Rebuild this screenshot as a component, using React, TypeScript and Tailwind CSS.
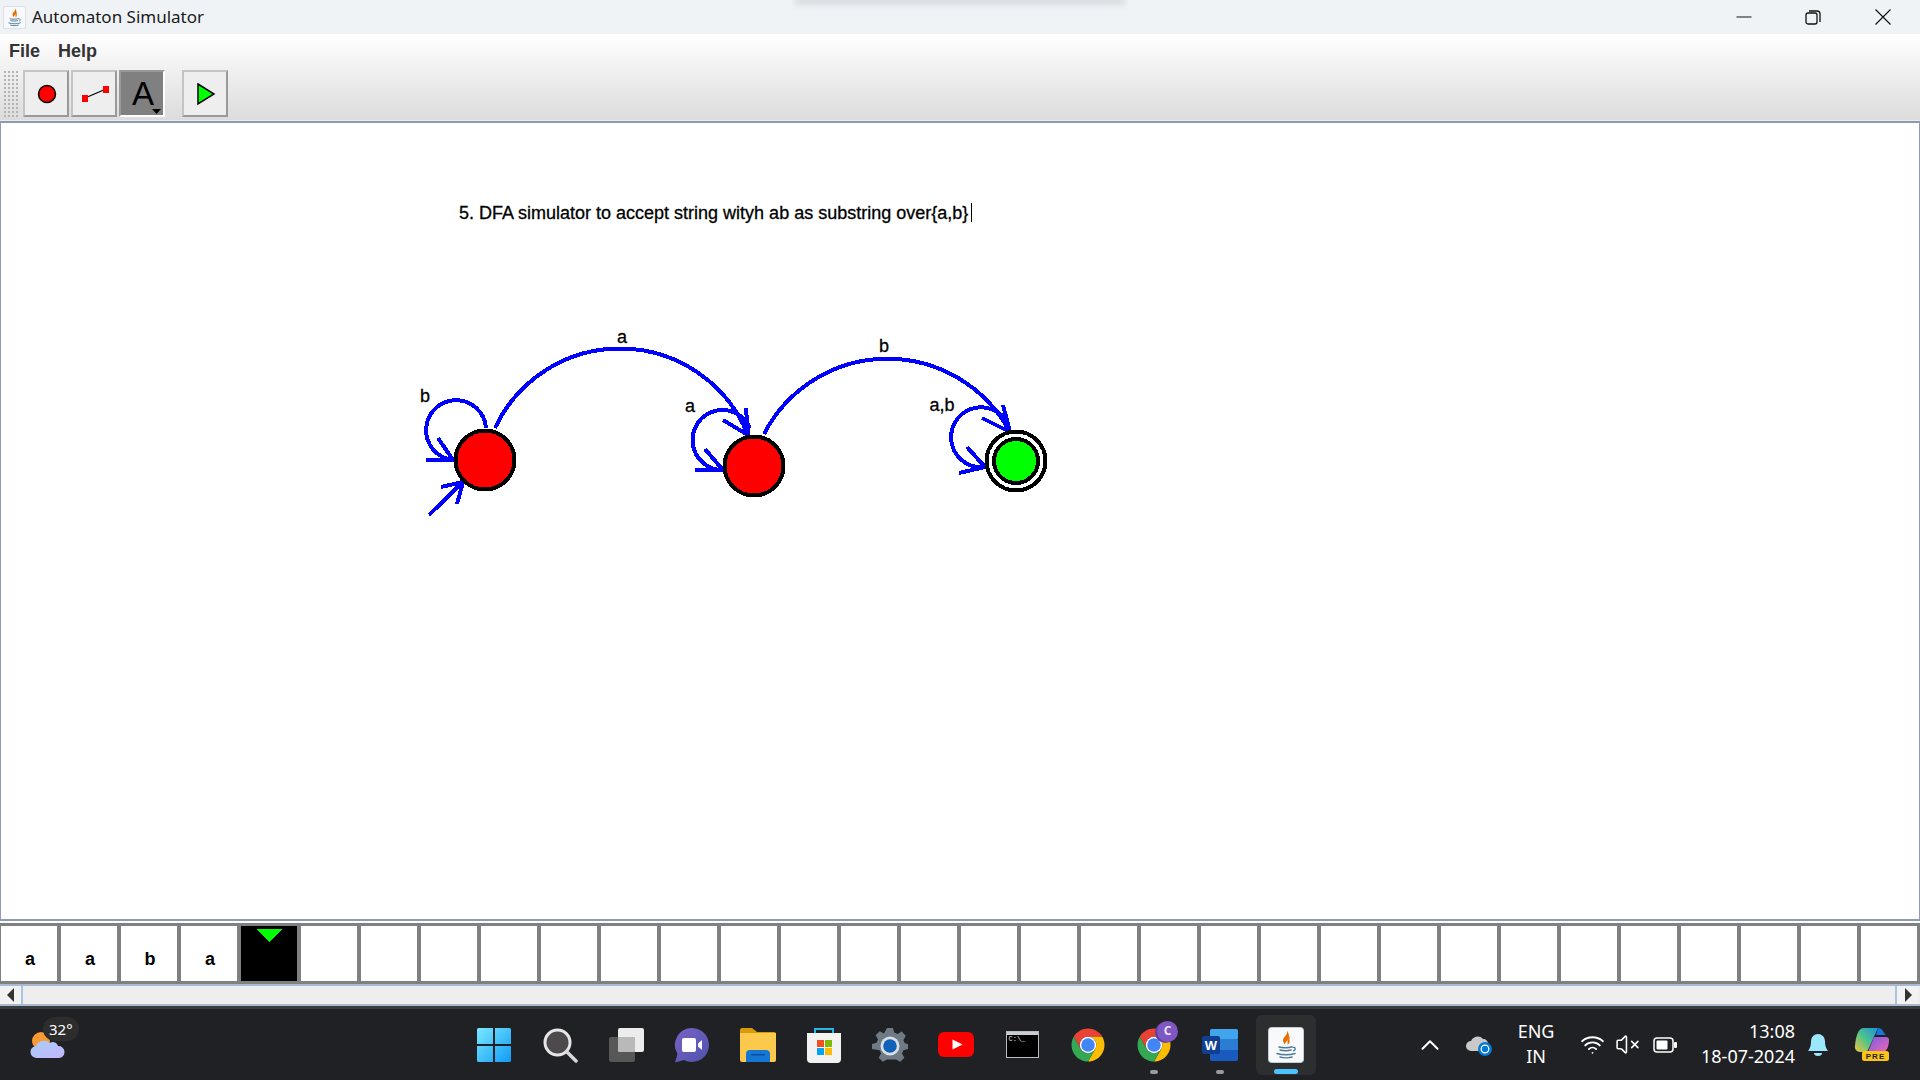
import React from 'react';
import { ChevronUp, VolumeX, Wifi } from 'lucide-react';

const tape = ['a', 'a', 'b', 'a'];
const cells = Array.from({ length: 32 }, (_, i) => i);

const JavaIcon = ({ size }: { size: number }) => (
    <svg width={size} height={size} viewBox="0 0 36 36">
        <rect x="0.5" y="0.5" width="35" height="35" rx="3" fill="#f7f9fb" stroke="#c5ced8" />
        <path d="M19 4c1 4-4 6-4 9.500 0 1.500 1 3 2 4-0.400-3 5-5 4-9-0.300-1.800-1-3.500-2-4.500z" fill="#e76f00" />
        <path d="M23 9c-3 2-4 4-3.500 6 0.300 1 0.500 2-0.500 3 2.500-1 3-3 2.500-4.500-0.300-1.500 0-3 1.500-4.500z" fill="#e76f00" />
        <path d="M11 20c3 1 10 1 13-0.200M12 23c3 0.800 8 0.800 11 0M9 26.500c5 1.800 13 1.800 18 0M12 30c3 1 9 1 12 0" fill="none" stroke="#4f7a9a" strokeWidth="1.500" strokeLinecap="round" />
        <path d="M24.500 20.500c3-1 4 2 0.500 3.500" fill="none" stroke="#4f7a9a" strokeWidth="1.300" />
    </svg>
);

const Chrome = () => (
    <svg width="36" height="36" viewBox="0 0 48 48">
        <path d="M24 13H43.050A22 22 0 0 0 4.950 13L14.470 29.500A11 11 0 0 1 24 13Z" fill="#ea4335" />
        <path d="M24 13H43.050A22 22 0 0 0 4.950 13L14.470 29.500A11 11 0 0 1 24 13Z" fill="#fbbc04" transform="rotate(120 24 24)" />
        <path d="M24 13H43.050A22 22 0 0 0 4.950 13L14.470 29.500A11 11 0 0 1 24 13Z" fill="#34a853" transform="rotate(240 24 24)" />
        <circle cx="24" cy="24" r="11" fill="#fff" />
        <circle cx="24" cy="24" r="9" fill="#4285f4" />
    </svg>
);

const StartIcon = () => (
    <svg width="36" height="36" viewBox="0 0 36 36">
        <defs>
            <linearGradient id="win" x1="0" y1="0" x2="1" y2="1">
                <stop offset="0" stopColor="#7ce8ff" />
                <stop offset="1" stopColor="#0f9bf5" />
            </linearGradient>
        </defs>
        <path d="M1 2.500A1.500 1.500 0 0 1 2.500 1H17v16H1zM19 1h14.500A1.500 1.500 0 0 1 35 2.500V17H19zM1 19h16v16H2.500A1.500 1.500 0 0 1 1 33.500zM19 19h16v14.500a1.500 1.500 0 0 1-1.500 1.500H19z" fill="url(#win)" />
    </svg>
);

const SearchIcon = () => (
    <svg width="36" height="36" viewBox="0 0 36 36">
        <circle cx="15.500" cy="15.500" r="12.500" fill="#4c4a4d" stroke="#e6e6e6" strokeWidth="3" />
        <path d="M25 25l9 9" stroke="#d8d8d8" strokeWidth="3.500" strokeLinecap="round" />
    </svg>
);

const TaskView = () => (
    <svg width="36" height="36" viewBox="0 0 36 36">
        <rect x="10" y="1" width="26" height="24" rx="2" fill="#ececec" />
        <rect x="1" y="10" width="26" height="25" rx="2" fill="#5d5d5d" fillOpacity="0.9" />
        <rect x="10" y="10" width="17" height="15" rx="1" fill="#b9b9b9" />
    </svg>
);

const MeetIcon = () => (
    <svg width="36" height="36" viewBox="0 0 36 36">
        <defs>
            <linearGradient id="meet" x1="0" y1="0" x2="1" y2="1">
                <stop offset="0" stopColor="#7a62c4" />
                <stop offset="1" stopColor="#4d53ad" />
            </linearGradient>
        </defs>
        <path d="M18 1a17 17 0 1 1-8 32L1 35.500 3.500 27A17 17 0 0 1 18 1z" fill="url(#meet)" />
        <rect x="8" y="11" width="14" height="14" rx="2" fill="#fff" />
        <path d="M24 16.500l4-3.500v10l-4-3.500z" fill="#fff" />
    </svg>
);

const FolderIcon = () => (
    <svg width="36" height="34" viewBox="0 0 36 34">
        <path d="M0 2a2 2 0 0 1 2-2h10l5 4h17a2 2 0 0 1 2 2v4H0z" fill="#d89c0a" />
        <path d="M0 5h36v27a2 2 0 0 1-2 2H2a2 2 0 0 1-2-2z" fill="#fcc94d" />
        <path d="M6 34v-8a4 4 0 0 1 4-4h16a4 4 0 0 1 4 4v8z" fill="#1477d4" />
        <rect x="11" y="26" width="14" height="1.500" fill="#0b4f9c" />
    </svg>
);

const StoreIcon = () => (
    <svg width="36" height="36" viewBox="0 0 36 36">
        <path d="M9 7V2h18v5" fill="none" stroke="#2bb3ea" strokeWidth="2" />
        <path d="M1 6h34v26a4 4 0 0 1-4 4H5a4 4 0 0 1-4-4z" fill="#f2f2f2" />
        <rect x="11" y="13" width="7" height="7" fill="#f25022" />
        <rect x="19" y="13" width="7" height="7" fill="#7fba00" />
        <rect x="11" y="21" width="7" height="7" fill="#00a4ef" />
        <rect x="19" y="21" width="7" height="7" fill="#ffb900" />
    </svg>
);

const SettingsIcon = () => (
    <svg width="36" height="36" viewBox="0 0 36 36">
        <path d="M15 1h6l1.200 4.600 3.300 1.400 4.200-2.400 4.100 4.100-2.400 4.200 1.400 3.300L36 17v5l-4.600 1.200-1.400 3.300 2.400 4.200-4.100 4.100-4.200-2.400H15l-4.200 2.400-4.100-4.100 2.400-4.200-1.400-3.300L0 22v-5l4.600-1.200 1.400-3.300-2.400-4.200 4.100-4.100 4.200 2.400z" fill="#6f7a85" />
        <circle cx="18" cy="19" r="9.500" fill="#d9dfe5" />
        <circle cx="18" cy="19" r="6.800" fill="#0f62b8" />
    </svg>
);

const YouTube = () => (
    <svg width="36" height="26" viewBox="0 0 36 26">
        <rect width="36" height="25" rx="6" fill="#f00" />
        <path d="M14.500 7.500l10 5-10 5z" fill="#fff" />
    </svg>
);

const CmdIcon = () => (
    <div className="flex h-[27px] w-[33px] flex-col border border-[#b8bcc0] bg-black">
        <div className="h-[3px] bg-[#c9ccd0]" />
        <span className="pl-[2px] font-['Liberation_Mono',monospace] text-[7px] leading-[9px] text-[#e8e8e8]">C:\_</span>
    </div>
);

const WordIcon = () => (
    <svg width="36" height="32" viewBox="0 0 36 32">
        <rect x="8" y="0" width="28" height="32" rx="2" fill="#185abd" />
        <rect x="8" y="0" width="28" height="10.500" rx="2" fill="#41a5ee" />
        <rect x="8" y="10.500" width="28" height="10.500" fill="#2b7cd3" />
        <rect x="0" y="7" width="18" height="18" rx="2" fill="#103f91" />
        <text x="9" y="21" textAnchor="middle" fontSize="13" fontWeight="700" fill="#fff" fontFamily="Liberation Sans, sans-serif">W</text>
    </svg>
);

const Copilot = () => (
    <svg width="36" height="34" viewBox="0 0 36 34">
        <defs>
            <linearGradient id="cpa" x1="0" y1="1" x2="1" y2="0">
                <stop offset="0" stopColor="#f4c53c" />
                <stop offset="0.500" stopColor="#4cc38a" />
                <stop offset="1" stopColor="#1d8fe0" />
            </linearGradient>
            <linearGradient id="cpb" x1="0" y1="0" x2="1" y2="1">
                <stop offset="0" stopColor="#7a58e8" />
                <stop offset="1" stopColor="#f06ab0" />
            </linearGradient>
        </defs>
        <path d="M10 0h14l-10 22a4 4 0 0 1-4 2H6a5 5 0 0 1-5-6C2 8 4 0 10 0z" fill="url(#cpa)" />
        <path d="M24 0c3 0 5 2 6 5l2 2H22z" fill="#1677d8" />
        <path d="M20 9h12a3 3 0 0 1 3 3c0 5-2 12-6 12H14z" fill="url(#cpb)" />
        <rect x="8" y="23" width="27" height="10" rx="2.500" fill="#fcc419" />
        <text x="21.500" y="31" textAnchor="middle" fontSize="8" fontWeight="700" letterSpacing="1" fill="#222" fontFamily="Liberation Sans, sans-serif">PRE</text>
    </svg>
);

const WeatherIcon = () => (
    <svg width="36" height="30" viewBox="0 0 36 30">
        <defs>
            <linearGradient id="cloud" x1="0" y1="0" x2="1" y2="1">
                <stop offset="0" stopColor="#a9cdf8" />
                <stop offset="1" stopColor="#c3b6fb" />
            </linearGradient>
        </defs>
        <circle cx="11" cy="11" r="9" fill="#f79a33" />
        <path d="M7 28a6 6 0 0 1-1-12c2-5 10-7 14-3 2-2 7-1 8 3a6 6 0 0 1 1 12z" fill="url(#cloud)" />
    </svg>
);

const dockIcons = [
    <StartIcon key="start" />,
    <SearchIcon key="search" />,
    <TaskView key="taskview" />,
    <MeetIcon key="meet" />,
    <FolderIcon key="folder" />,
    <StoreIcon key="store" />,
    <SettingsIcon key="settings" />,
    <YouTube key="yt" />,
    <CmdIcon key="cmd" />,
    <Chrome key="chrome" />,
];

const ToolButton = ({ children, active }: { children: React.ReactNode; active?: boolean }) => (
    <div
        className={
            active
                ? 'relative flex h-[47px] w-[46px] items-center justify-center border-2 border-[#999] border-b-white border-r-white bg-[#808080] pl-[2px]'
                : 'relative flex h-[47px] w-[46px] items-center justify-center border-2 border-t-[#c4c4c4] border-l-[#c4c4c4] border-r-[#999] border-b-[#999] bg-[#eee] pl-[2px]'
        }
    >
        {children}
    </div>
);

const Diagram = () => (
    <svg className="h-[796px] w-[1918px]" viewBox="1 123 1918 796" shapeRendering="crispEdges">
        <g fontFamily="Liberation Sans, sans-serif" fontSize="18" fill="#000" textAnchor="middle" stroke="#000" strokeWidth="0.3">
            <text x="459" y="219" textAnchor="start">5. DFA simulator to accept string wityh ab as substring over{'{'}a,b{'}'}</text>
            <text x="622" y="343">a</text>
            <text x="425" y="402">b</text>
            <text x="690" y="412">a</text>
            <text x="884" y="352">b</text>
            <text x="942" y="411">a,b</text>
        </g>
        <path d="M971 203v19" stroke="#000" strokeWidth="1" />
        <g fill="none" stroke="#0000ff" strokeWidth="4">
            <path d="M495 428A138 138 0 0 1 748 435" />
            <path d="M746 408L748 435L723 420" />
            <path d="M486 428A30 30 0 1 0 453 460" />
            <path d="M426 460H453L438 438" />
            <path d="M429 515L463 482M441 487L463 482L457 504" />
            <path d="M750 428A30 30 0 1 0 723 470" />
            <path d="M695 470H723L705 449" />
            <path d="M764 434A139 139 0 0 1 1010 432" />
            <path d="M1003 405L1010 432L982 418" />
            <path d="M1008 424A30 30 0 1 0 985 467" />
            <path d="M959 473L985 467L967 447" />
        </g>
        <g stroke="#000" strokeWidth="4">
            <circle cx="485" cy="460" r="29.500" fill="#ff0000" />
            <circle cx="754" cy="466" r="29.500" fill="#ff0000" />
            <circle cx="1016" cy="461" r="29.500" fill="#fff" />
            <circle cx="1016" cy="461" r="22" fill="#00ff00" />
        </g>
    </svg>
);

const App: React.FC = () => {
    return (
        <div className="relative flex h-[1080px] w-[1920px] flex-col overflow-hidden bg-white font-['Liberation_Sans',sans-serif]">
            {/* title bar */}
            <div className="relative flex h-[34px] shrink-0 items-center overflow-hidden bg-[#f0f3f6] pl-[3px]">
                {/* shadow of a hidden popup */}
                <div className="absolute left-[795px] top-[-4px] h-[9px] w-[330px] bg-[#d8dcdf] blur-[3px]" />
                <JavaIcon size={23} />
                <span className="ml-[6px] font-['Noto_Sans',sans-serif] text-[17px] text-[#1a1a1a]">Automaton Simulator</span>
                <div className="ml-auto flex items-center">
                    <svg width="18" height="18" viewBox="0 0 18 18" className="mr-[51px]">
                        <path d="M1.500 9h15" stroke="#111" strokeWidth="1" />
                    </svg>
                    <svg width="18" height="18" viewBox="0 0 18 18" className="mr-[52px]">
                        <rect x="2" y="5" width="11" height="11" rx="2" fill="none" stroke="#111" strokeWidth="1.300" />
                        <path d="M5 3h8a3 3 0 0 1 3 3v8" fill="none" stroke="#111" strokeWidth="1.300" />
                    </svg>
                    <svg width="18" height="18" viewBox="0 0 18 18" className="mr-[28px]">
                        <path d="M1.500 1.500l15 15M16.500 1.500l-15 15" stroke="#111" strokeWidth="1.200" />
                    </svg>
                </div>
            </div>

            {/* menu + toolbar */}
            <div className="flex h-[87px] shrink-0 flex-col border-b border-[#ececec] bg-gradient-to-b from-white to-[#dcdcdc]">
                <div className="flex h-[36px] gap-[18px] pl-[9px] pt-[6px] text-[18px] font-bold leading-[22px] text-[#333]">
                    <span>File</span>
                    <span>Help</span>
                </div>
                <div className="flex items-start pl-[3px]">
                    <div className="mr-[5px] h-[47px] w-[15px] bg-[radial-gradient(#b4b4b4_1px,transparent_1px)] bg-[length:4px_4px]" />
                    <div className="flex gap-[2px]">
                        <ToolButton>
                            <svg width="20" height="20" viewBox="0 0 20 20">
                                <circle cx="10" cy="10" r="8.500" fill="#ff0000" stroke="#000" strokeWidth="1.500" />
                            </svg>
                        </ToolButton>
                        <ToolButton>
                            <svg width="30" height="20" viewBox="0 0 30 20">
                                <path d="M5 14L26 5" stroke="#000" strokeWidth="1.300" />
                                <rect x="2" y="11" width="6" height="7" fill="#ff0000" />
                                <rect x="23" y="2" width="6" height="7" fill="#ff0000" />
                            </svg>
                        </ToolButton>
                        <ToolButton active>
                            <span className="text-[33px] leading-none text-black">A</span>
                            <svg width="9" height="5" viewBox="0 0 9 5" className="absolute bottom-[1px] right-[2px]">
                                <path d="M0 0h9L4.500 5z" fill="#000" />
                            </svg>
                        </ToolButton>
                    </div>
                    <div className="ml-[17px]">
                        <ToolButton>
                            <svg width="20" height="24" viewBox="0 0 20 24">
                                <path d="M2 2L18 12L2 22Z" fill="#00ff00" stroke="#000" strokeWidth="1.500" />
                            </svg>
                        </ToolButton>
                    </div>
                </div>
            </div>

            {/* canvas */}
            <div className="h-[800px] shrink-0 border-x border-y-2 border-[#8a9bb3] bg-white">
                <Diagram />
            </div>

            {/* tape */}
            <div className="mt-[2px] flex h-[61px] shrink-0 gap-[4px] border-y-[3px] border-[#808080] bg-[#808080] pl-[1px]">
                {cells.map((i) => (
                    <div
                        key={i}
                        className={
                            i === 4
                                ? 'relative flex h-[55px] w-[56px] shrink-0 justify-center bg-black'
                                : 'flex h-[55px] w-[56px] shrink-0 items-end justify-center bg-white pb-[12px] pl-[2px] text-[18px] font-bold leading-[20px] text-black'
                        }
                    >
                        {i === 4 ? (
                            <svg width="26" height="13" viewBox="0 0 26 13" className="mt-[3px]" shapeRendering="crispEdges">
                                <path d="M0 0h26L13 13z" fill="#00ff00" />
                            </svg>
                        ) : (
                            tape[i]
                        )}
                    </div>
                ))}
            </div>

            {/* scrollbar */}
            <div className="flex h-[22px] shrink-0 border-y-2 border-[#a9bad0] bg-[#eee]">
                <div className="flex w-[23px] items-center justify-center border-r-2 border-[#a9c4e0] bg-[#f2f2f2]">
                    <svg width="8" height="14" viewBox="0 0 8 14">
                        <path d="M7 0v14L0 7z" fill="#333" />
                    </svg>
                </div>
                <div className="flex-1" />
                <div className="mr-[2px] flex w-[23px] items-center justify-center border-l-2 border-[#a9c4e0] bg-[#f2f2f2]">
                    <svg width="8" height="14" viewBox="0 0 8 14">
                        <path d="M1 0v14l7-7z" fill="#333" />
                    </svg>
                </div>
            </div>

            {/* taskbar */}
            <div className="relative flex h-[74px] shrink-0 items-center border-t-[3px] border-[#3a3d40] bg-[#202124] font-['Noto_Sans',sans-serif] text-white">
                <div className="relative w-[461px] shrink-0 self-stretch">
                    <div className="absolute left-[30px] top-[21px]">
                        <WeatherIcon />
                    </div>
                    <div className="absolute left-[43px] top-[8px] rounded-full bg-[#2d2d2d] px-[6px] text-[15px] leading-[24px]">32°</div>
                </div>
                <div className="flex items-center">
                    {dockIcons.map((icon, i) => (
                        <div key={i} className="flex h-[60px] w-[66px] items-center justify-center">
                            {icon}
                        </div>
                    ))}
                    <div className="relative flex h-[60px] w-[66px] items-center justify-center">
                        <Chrome />
                        <div className="absolute left-[36px] top-[6px] flex h-[21px] w-[21px] items-center justify-center rounded-full bg-[#7e57c2] text-[12px] font-bold leading-none text-[#e9e0ff] shadow-[-2px_1px_0_#5e3fa0]">
                            C
                        </div>
                        <div className="absolute bottom-[1px] left-[29px] h-[4px] w-[8px] rounded-full bg-[#9a9a9a]" />
                    </div>
                    <div className="relative flex h-[60px] w-[66px] items-center justify-center">
                        <WordIcon />
                        <div className="absolute bottom-[1px] left-[29px] h-[4px] w-[8px] rounded-full bg-[#9a9a9a]" />
                    </div>
                    <div className="relative mx-[3px] flex h-[60px] w-[60px] items-center justify-center rounded-md bg-[#2d2e30]">
                        <JavaIcon size={36} />
                        <div className="absolute bottom-[1px] left-[18px] h-[5px] w-[24px] rounded-full bg-[#4cc2ff]" />
                    </div>
                </div>
                <div className="ml-auto flex items-center pr-[30px]">
                    <ChevronUp size={30} strokeWidth={1.6} className="mr-[21px]" />
                    <svg width="26" height="22" viewBox="0 0 26 22" className="mr-[25px]">
                        <path d="M5 17a5 5 0 0 1 0-10c2-5 9-6 12-2 3 0 5 2 5 5v7z" fill="#c9c9c9" />
                        <circle cx="19" cy="15" r="7" fill="#0078d4" />
                        <circle cx="19" cy="15" r="3.800" fill="none" stroke="#fff" strokeWidth="1.300" />
                    </svg>
                    <div className="mb-[2px] mr-[25px] flex w-[38px] flex-col items-center text-[18px] leading-[25px]">
                        <span>ENG</span>
                        <span>IN</span>
                    </div>
                    <Wifi size={25} strokeWidth={1.8} className="mr-[10px]" />
                    <VolumeX size={25} strokeWidth={1.5} className="mr-[13px]" />
                    <svg width="24" height="16" viewBox="0 0 24 16" className="mr-[24px]">
                        <rect x="1" y="1" width="19" height="14" rx="3" fill="none" stroke="#fff" strokeWidth="1.500" />
                        <rect x="3.500" y="3.500" width="11" height="9" rx="1" fill="#fff" />
                        <rect x="21" y="5" width="3" height="6" rx="1" fill="#fff" />
                    </svg>
                    <div className="mb-[2px] flex flex-col items-end text-[18px] leading-[25px]">
                        <span>13:08</span>
                        <span>18-07-2024</span>
                    </div>
                    <svg width="22" height="24" viewBox="0 0 22 24" className="ml-[12px] mr-[25px]">
                        <path d="M11 1a7 7 0 0 1 7 7c0 5 1 7 3 10H1c2-3 3-5 3-10a7 7 0 0 1 7-7z" fill="#9be7fb" />
                        <path d="M7 20h8a4 3 0 0 1-8 0z" fill="#9be7fb" />
                    </svg>
                    <Copilot />
                </div>
            </div>
        </div>
    );
};

export default App;
